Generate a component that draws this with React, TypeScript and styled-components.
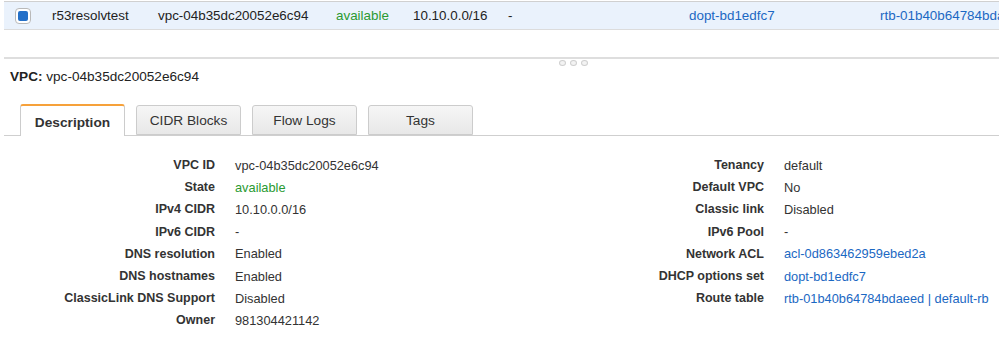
import React from "react";
import styled, { createGlobalStyle } from "styled-components";

const GlobalStyle = createGlobalStyle`
  html, body { margin: 0; padding: 0; background: #fff; }
  body {
    font-family: "Liberation Sans", Arial, Helvetica, sans-serif;
    color: #333;
    width: 999px;
    height: 356px;
    overflow: hidden;
  }
`;

const Page = styled.div`
  display: flex;
  flex-direction: column;
  width: 999px;
`;

const TableRow = styled.div`
  margin-left: 4px;
  height: 27px;
  margin-top: 1px;
  display: flex;
  align-items: center;
  background: #eaf2fc;
  border-top: 1px solid #d0d0d0;
  border-bottom: 1px solid #dcdcdc;
  font-size: 13.4px;
  white-space: nowrap;
  overflow: hidden;
`;

const Cell = styled.div<{ $w: number; $tone?: "ok" | "link" }>`
  flex: 0 0 ${(p) => p.$w}px;
  color: ${(p) => (p.$tone === "ok" ? "#2a9a32" : p.$tone === "link" ? "#1b68c3" : "#222")};
`;

const CheckCell = styled.div`
  flex: 0 0 48px;
  display: flex;
  align-items: center;
  padding-left: 11px;
  box-sizing: border-box;
`;

const CheckBox = styled.span`
  width: 16px;
  height: 16px;
  box-sizing: border-box;
  border: 1px solid #b9b9b9;
  border-radius: 4px;
  background: #fff;
  display: flex;
  align-items: center;
  justify-content: center;
  &::after {
    content: "";
    width: 10px;
    height: 10px;
    border-radius: 2px;
    background: #2470c8;
  }
`;

const Splitter = styled.div`
  margin-top: 27px;
  margin-left: 4px;
  height: 2px;
  background: #dedede;
`;

const Dots = styled.div`
  display: flex;
  gap: 4px;
  margin-left: 559px;
  margin-top: 1px;
`;

const Dot = styled.span`
  width: 5px;
  height: 4px;
  border-radius: 50%;
  border: 1px solid #cfcfcf;
  background: #f3f3f3;
`;

const Header = styled.div`
  margin-top: 3px;
  margin-left: 10px;
  font-size: 13.6px;
  color: #222;
  line-height: 16px;
  b { font-weight: bold; }
`;

const TabBar = styled.div`
  margin-top: 19px;
  margin-left: 4px;
  padding-left: 16px;
  display: flex;
  gap: 11px;
  height: 31px;
  border-bottom: 1px solid #cfcfcf;
  align-items: flex-end;
`;

const Tab = styled.div<{ $active?: boolean }>`
  width: 105px;
  height: ${(p) => (p.$active ? "32px" : "30px")};
  box-sizing: border-box;
  margin-bottom: ${(p) => (p.$active ? "-1px" : "0")};
  border: 1px solid #cccccc;
  border-top: ${(p) => (p.$active ? "2px solid #f6a13a" : "1px solid #cccccc")};
  border-bottom: ${(p) => (p.$active ? "none" : "1px solid #cccccc")};
  border-radius: 3px 3px 0 0;
  background: ${(p) => (p.$active ? "#fff" : "linear-gradient(#f6f6f6, #e8e8e8)")};
  display: flex;
  align-items: center;
  justify-content: center;
  padding-top: ${(p) => (p.$active ? "2px" : "0")};
  font-size: 13.7px;
  font-weight: ${(p) => (p.$active ? "bold" : "normal")};
  color: #333;
`;

const Details = styled.div`
  display: flex;
  margin-top: 18px;
`;

const Column = styled.div<{ $w?: number }>`
  flex: 0 0 ${(p) => (p.$w ? `${p.$w}px` : "auto")};
  display: flex;
  flex-direction: column;
`;

const Row = styled.div`
  display: flex;
  height: 22.2px;
  align-items: center;
  white-space: nowrap;
`;

const Label = styled.div`
  flex: 0 0 215px;
  text-align: right;
  font-weight: bold;
  font-size: 12.5px;
  color: #333;
`;

const Value = styled.div<{ $tone?: "ok" | "link" }>`
  padding-left: 20px;
  font-size: 12.8px;
  color: ${(p) => (p.$tone === "ok" ? "#2a9a32" : p.$tone === "link" ? "#1b68c3" : "#333")};
`;

type Item = { label: string; value: string; tone?: "ok" | "link" };

const left: Item[] = [
  { label: "VPC ID", value: "vpc-04b35dc20052e6c94" },
  { label: "State", value: "available", tone: "ok" },
  { label: "IPv4 CIDR", value: "10.10.0.0/16" },
  { label: "IPv6 CIDR", value: "-" },
  { label: "DNS resolution", value: "Enabled" },
  { label: "DNS hostnames", value: "Enabled" },
  { label: "ClassicLink DNS Support", value: "Disabled" },
  { label: "Owner", value: "981304421142" },
];

const right: Item[] = [
  { label: "Tenancy", value: "default" },
  { label: "Default VPC", value: "No" },
  { label: "Classic link", value: "Disabled" },
  { label: "IPv6 Pool", value: "-" },
  { label: "Network ACL", value: "acl-0d863462959ebed2a", tone: "link" },
  { label: "DHCP options set", value: "dopt-bd1edfc7", tone: "link" },
  { label: "Route table", value: "rtb-01b40b64784bdaeed | default-rb", tone: "link" },
];

export default function App() {
  return (
    <Page>
      <GlobalStyle />
      <TableRow>
        <CheckCell>
          <CheckBox />
        </CheckCell>
        <Cell $w={106}>r53resolvtest</Cell>
        <Cell $w={178}>vpc-04b35dc20052e6c94</Cell>
        <Cell $w={77} $tone="ok">available</Cell>
        <Cell $w={95}>10.10.0.0/16</Cell>
        <Cell $w={181}>-</Cell>
        <Cell $w={191} $tone="link">dopt-bd1edfc7</Cell>
        <Cell $w={200} $tone="link">rtb-01b40b64784bdaeed</Cell>
      </TableRow>
      <Splitter />
      <Dots>
        <Dot />
        <Dot />
        <Dot />
      </Dots>
      <Header>
        <b>VPC:</b> vpc-04b35dc20052e6c94
      </Header>
      <TabBar>
        <Tab $active>Description</Tab>
        <Tab>CIDR Blocks</Tab>
        <Tab>Flow Logs</Tab>
        <Tab>Tags</Tab>
      </TabBar>
      <Details>
        <Column $w={549}>
          {left.map((it) => (
            <Row key={it.label}>
              <Label>{it.label}</Label>
              <Value $tone={it.tone}>{it.value}</Value>
            </Row>
          ))}
        </Column>
        <Column>
          {right.map((it) => (
            <Row key={it.label}>
              <Label>{it.label}</Label>
              <Value $tone={it.tone}>{it.value}</Value>
            </Row>
          ))}
        </Column>
      </Details>
    </Page>
  );
}
